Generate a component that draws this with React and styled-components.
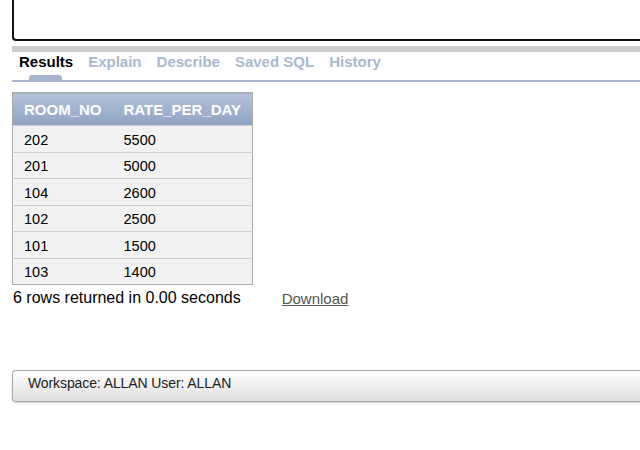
import React from "react";
import styled, { createGlobalStyle } from "styled-components";

const rows = [
  { room: "202", rate: "5500" },
  { room: "201", rate: "5000" },
  { room: "104", rate: "2600" },
  { room: "102", rate: "2500" },
  { room: "101", rate: "1500" },
  { room: "103", rate: "1400" },
];

const tabs = ["Results", "Explain", "Describe", "Saved SQL", "History"];

function App() {
  return (
    <>
      <GlobalStyle />
      <Page>
        <Editor />
        <Splitter />
        <TabBar>
          {tabs.map((t, i) => (
            <Tab key={t} active={i === 0}>
              {t}
            </Tab>
          ))}
        </TabBar>

        <Results>
          <thead>
            <tr>
              <th>ROOM_NO</th>
              <th>RATE_PER_DAY</th>
            </tr>
          </thead>
          <tbody>
            {rows.map((r) => (
              <tr key={r.room}>
                <td>{r.room}</td>
                <td>{r.rate}</td>
              </tr>
            ))}
          </tbody>
        </Results>

        <Summary>
          <span>6 rows returned in 0.00 seconds</span>
          <a href="#download">Download</a>
        </Summary>

        <Footer>Workspace: ALLAN User: ALLAN</Footer>
      </Page>
    </>
  );
}

const GlobalStyle = createGlobalStyle`
  html, body {
    margin: 0;
    background: #fff;
  }
  body {
    font-family: "Liberation Sans", Arial, sans-serif;
    color: #000;
  }
`;

const Page = styled.div`
  width: 640px;
  height: 450px;
  padding-left: 12px;
  box-sizing: border-box;
  overflow: hidden;
`;

const Editor = styled.div`
  height: 39px;
  border: 2px solid #111;
  border-top: none;
  border-right: none;
  border-radius: 0 0 0 4px;
  box-sizing: content-box;
`;

const Splitter = styled.div`
  height: 6px;
  margin-top: 5px;
  background: #cccccc;
`;

const TabBar = styled.div`
  display: flex;
  gap: 15px;
  padding-left: 7px;
  height: 30px;
  border-bottom: 2px solid #a8b8cf;
  box-sizing: border-box;
`;

const Tab = styled.div`
  position: relative;
  font-size: 15px;
  font-weight: bold;
  line-height: 20px;
  color: ${(p) => (p.active ? "#000" : "#a9b9d0")};

  &::after {
    content: "";
    display: ${(p) => (p.active ? "block" : "none")};
    position: absolute;
    left: 10px;
    right: 11px;
    bottom: 0;
    height: 5px;
    background: #a6b5cd;
    border-radius: 3px 3px 0 0;
  }
`;

const Results = styled.table`
  margin-top: 10px;
  border-collapse: collapse;
  border: 1px solid #aaaaaa;

  th {
    height: 32px;
    padding: 0 11px;
    font-size: 15px;
    font-weight: bold;
    color: #fff;
    text-align: left;
    background: linear-gradient(#b4c2d8, #8fa3c3);
  }

  td {
    height: 23.5px;
    padding: 2px 11px 0;
    font-size: 14.5px;
    background: #f2f2f2;
    border-top: 1px solid #cccccc;
  }
`;

const Summary = styled.div`
  display: flex;
  align-items: center;
  gap: 41px;
  height: 26px;
  padding-left: 1px;
  font-size: 16px;

  a {
    font-size: 15px;
    color: #555;
    text-decoration: underline;
  }
`;

const Footer = styled.div`
  margin-top: 59px;
  height: 32px;
  display: flex;
  align-items: center;
  padding: 0 0 6px 15px;
  box-sizing: border-box;
  font-size: 14px;
  letter-spacing: -0.1px;
  color: #222;
  border: 1px solid #a9a9a9;
  border-right: none;
  border-radius: 4px 0 0 4px;
  background: linear-gradient(#ffffff, #dedede);
  box-shadow: 0 1px 2px rgba(0, 0, 0, 0.2);
`;

export default App;
